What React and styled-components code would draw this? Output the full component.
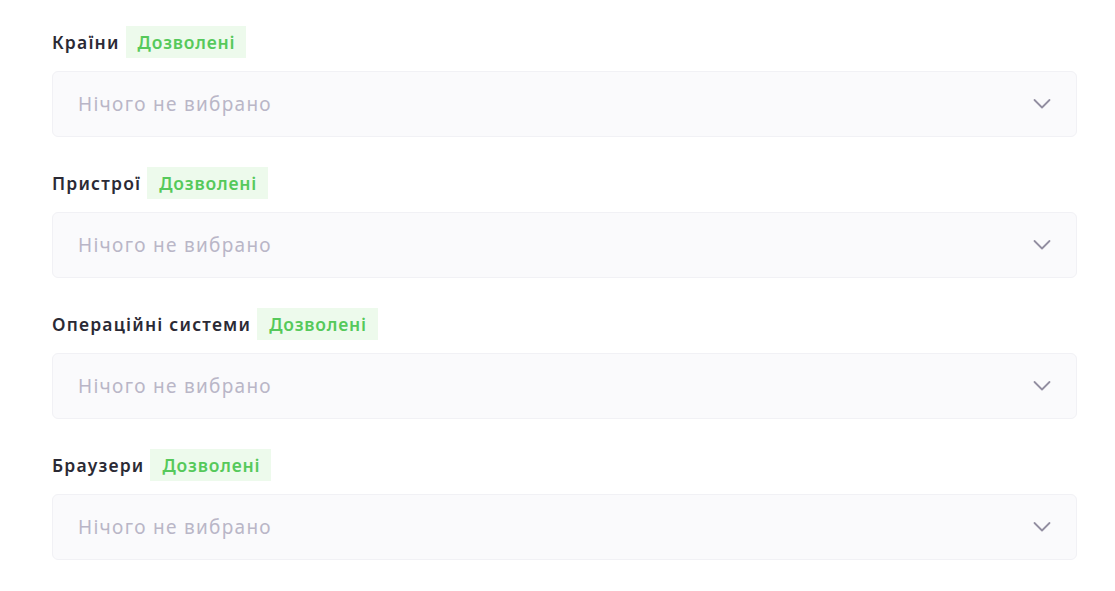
import React from "react";
import styled, { createGlobalStyle } from "styled-components";

const Global = createGlobalStyle`
  html, body { margin: 0; padding: 0; background: #ffffff; }
  body { font-family: "Noto Sans", "DejaVu Sans", sans-serif; }
`;

const Page = styled.div`
  padding: 26px 38px 0 52px;
  display: flex;
  flex-direction: column;
  gap: 30px;
`;

const Field = styled.div`
  display: flex;
  flex-direction: column;
  gap: 13px;
`;

const LabelRow = styled.div`
  display: flex;
  align-items: center;
  gap: 6px;
  height: 32px;
`;

const Label = styled.span`
  font-size: 17.5px;
  font-weight: 600;
  letter-spacing: 1.2px;
  color: #2b2a35;
`;

const Badge = styled.span`
  display: inline-flex;
  align-items: center;
  height: 32px;
  padding: 0 11px 0 12px;
  background: #edfaec;
  color: #56c95b;
  font-size: 17.5px;
  font-weight: 600;
  letter-spacing: 0.8px;
`;

const Select = styled.div`
  height: 66px;
  box-sizing: border-box;
  border: 1px solid #f1f1f5;
  border-radius: 6px;
  background: #fafafc;
  display: flex;
  align-items: center;
  justify-content: space-between;
  padding: 0 25px 0 25px;
`;

const Placeholder = styled.span`
  font-size: 19px;
  letter-spacing: 1.3px;
  color: #b9b6c7;
`;

const Chevron = () => (
  <svg width="18" height="12" viewBox="0 0 18 12" fill="none">
    <path d="M1.5 2 L9 9.5 L16.5 2" stroke="#928ea1" strokeWidth="1.8" strokeLinecap="round" strokeLinejoin="round" />
  </svg>
);

const fields = ["Країни", "Пристрої", "Операційні системи", "Браузери"];

export default function App() {
  return (
    <>
      <Global />
      <Page>
        {fields.map((f) => (
          <Field key={f}>
            <LabelRow>
              <Label>{f}</Label>
              <Badge>Дозволені</Badge>
            </LabelRow>
            <Select>
              <Placeholder>Нічого не вибрано</Placeholder>
              <Chevron />
            </Select>
          </Field>
        ))}
      </Page>
    </>
  );
}
